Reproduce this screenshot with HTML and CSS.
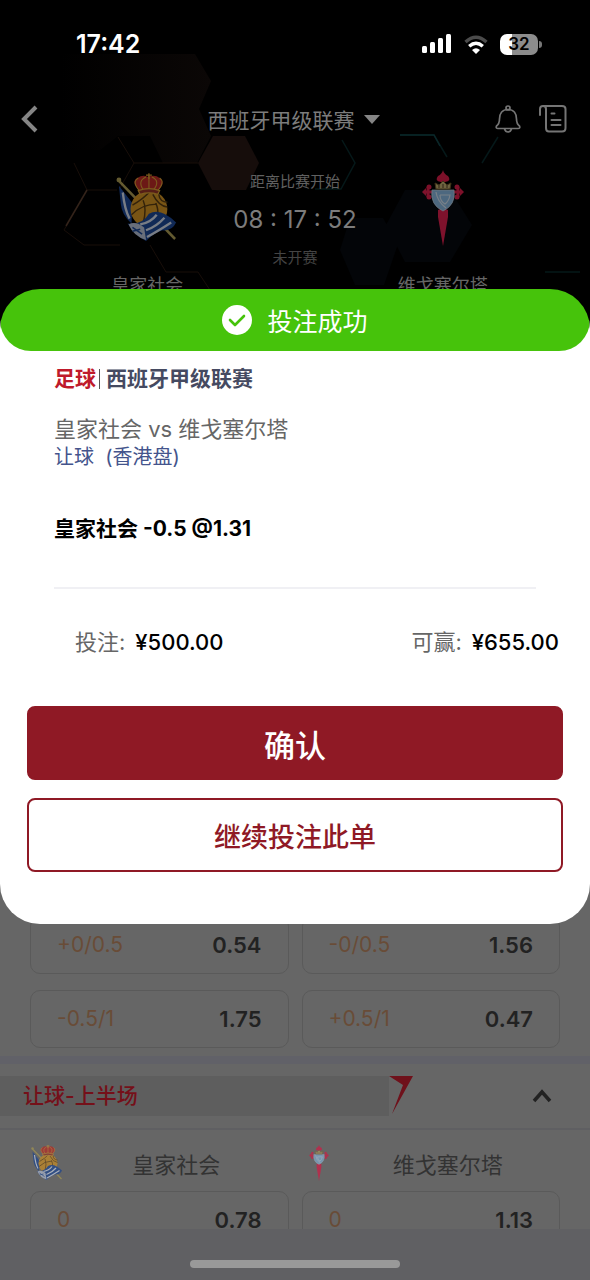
FILE: index.html
```html
<!DOCTYPE html>
<html lang="zh-CN">
<head>
  <meta charset="UTF-8" />
  <meta name="viewport" content="width=device-width, initial-scale=1.0" />
  <title>投注成功</title>
  <link rel="stylesheet" href="styles.css">
</head>

<body>
<!-- Shared crests -->
<svg class="sprite" aria-hidden="true">
  <symbol id="crest-rs" viewBox="0 0 64 72">
    <path d="M3 8 L61 68" stroke="#a59650" stroke-width="2.600" />
    <circle cx="3" cy="7" r="2.5" fill="#a59650" />
    <path d="M3 13 L17 31 L16 52 Q6 43 5 32 Z" fill="#1c4590" />
    <path d="M7 20 Q9 38 14 47" stroke="#c8d0de" stroke-width="2.400" fill="none" />
    <circle cx="34" cy="37" r="19" fill="#c88c22" />
    <path d="M17 33 Q28 27 36 18 M16 43 Q27 32 42 32 M28 28 Q32 37 28 52 M41 31 Q44 37 43 44 M38 22 Q44 34 53 35 M44 21 Q45 30 53 30" fill="none" stroke="#553a12" stroke-width="1.5" />
    <path d="M24 18 Q15 9 22 5 Q28 1 33 4 Q40 1 45 5 Q52 10 43 18 Z" fill="#b52a26" />
    <path d="M24 18 Q16 9 23 5 M28 17 Q22 8 31 4 M34 17 V3 M39 17 Q46 8 37 4 M43 18 Q51 9 45 5" stroke="#cf9b31" stroke-width="1.1" fill="none" />
    <path d="M34 0 V6 M31 2 H37 M23 18 Q34 14 45 18 L43 22 Q34 19 25 22 Z" stroke="#cf9b31" stroke-width="1.3" fill="#8f3325" />
    <path d="M12 52 Q27 54 34 42 Q46 35 62 51 Q58 60 48 59 Q40 61 31 70 Q19 64 12 52 Z" fill="#1c4590" />
    <path d="M25 53 Q36 51 42 43 M31 59 Q42 55 50 46 M32 66 Q43 60 57 51" stroke="#c8d0de" stroke-width="2.400" fill="none" />
    <path d="M13 53 Q20 49 29 56 L31 69 Q18 65 13 53 Z" fill="#aeb8cc" />
    <path d="M17 56 L27 63 M17 60 L25 58" stroke="#1c4590" stroke-width="1.5" />
  </symbol>
  <symbol id="crest-cv" viewBox="0 0 42 76">
    <path d="M21 0 Q22 4 26 6 Q30 11 23 12 H19 Q12 11 16 6 Q20 4 21 0 Z" fill="#d01c45" />
    <path d="M12 22 H3 M30 22 H39 M6 17 V27 M36 17 V27" stroke="#d01c45" stroke-width="3" />
    <circle cx="7" cy="17" r="2.500" fill="#d01c45" /><circle cx="7" cy="27" r="2.500" fill="#d01c45" />
    <circle cx="35" cy="17" r="2.500" fill="#d01c45" /><circle cx="35" cy="27" r="2.500" fill="#d01c45" />
    <path d="M0 22 L4 18 V26 Z M42 22 L38 18 V26 Z" fill="#d01c45" />
    <path d="M16 40 Q21 37 26 40 L26 47 L21 76 L16 47 Z" fill="#d01c45" />
    <path d="M10 20 H32 Q34 35 21 41 Q8 35 10 20 Z" fill="#7fabcf" stroke="#b4c3d0" stroke-width="0.8" />
    <path d="M14 22 Q15 31 24 38 M18 25 H28 Q27 31 23 34 Q18 31 18 25" stroke="#c5d2de" stroke-width="1.2" fill="none" />
    <path d="M14 19 L13 13 L17 15 L21 11 L25 15 L29 13 L28 19 Z" fill="#b8a66c" stroke="#665326" stroke-width="1" />
    <path d="M17 18 V15 M21 18 V14 M25 18 V15" stroke="#4d3920" stroke-width="1" />
  </symbol>
</svg>

<div class="screen">
  <header class="hero">
    <!-- Hexagon backdrop -->
    <svg class="hero-bg" viewBox="0 0 590 350" preserveAspectRatio="xMidYMin slice" aria-hidden="true">
      <defs>
        <linearGradient id="warm" x1="0" x2="1">
          <stop offset="0" stop-color="#000" />
          <stop offset="1" stop-color="#0b0706" />
        </linearGradient>
      </defs>
      <path d="M60 54 H195 L211 81 L199 109 L211 136 L197 163 H163 L150 136 H118 L100 150 H60 Z" fill="url(#warm)" />
      <path d="M213 136 H245 L259 163 L246 190 H212 L198 163 Z" fill="#160d0b" />
      <path d="M350 218 H383 L398 244 L384 285 H355 L340 250 Z M405 190 H450 L472 225 L450 262 H405 L386 225 Z" fill="#030508" />
      <g fill="none" stroke="#180e09">
        <path d="M74 163 L87 190 L64 230 L84 245 H120 M87 190 H117 M150 245 L166 272 H198 L210 290 M134 163 H198 M118 137 L134 163 L120 188" />
        <path d="M87 190 L66 226" stroke="#33231a" stroke-width="1.500" />
      </g>
      <g fill="none" stroke="#051819" stroke-width="1.500">
        <path d="M342 140 L355 163 L341 189 H315 M400 135 H434 L447 157 M482 163 L498 137 M545 272 H580" />
        <path d="M400 135 H434 L440 146" stroke="#0a2729" />
      </g>
    </svg>

    <div class="status-bar">
      <span class="clock">17:42</span>
      <svg class="signal" viewBox="0 0 30 20" aria-hidden="true">
        <g fill="#fff">
          <rect x="0" y="12" width="5" height="7" rx="1.5" /><rect x="8" y="8" width="5" height="11" rx="1.5" />
          <rect x="16" y="4" width="5" height="15" rx="1.5" /><rect x="24" y="0" width="5" height="19" rx="1.5" />
        </g>
      </svg>
      <svg class="wifi" viewBox="0 0 24 19" aria-hidden="true">
        <g fill="none" stroke-width="3.4">
          <path d="M1.500 7 Q12 -2.500 22.500 7" stroke="#4b4b4b" />
          <path d="M5.200 11.200 Q12 5.200 18.800 11.200" stroke="#fff" />
        </g>
        <path d="M8 15 Q12 11.500 16 15 L12 19 Z" fill="#fff" />
      </svg>
      <span class="battery">32</span>
    </div>

    <nav class="nav-bar">
      <button class="icon-btn" aria-label="返回">
        <svg width="20" height="30" viewBox="0 0 20 30" fill="none" stroke="#858585" stroke-width="4"><path d="M16 3 L4 15 L16 27" /></svg>
      </button>
      <button class="league-btn">西班牙甲级联赛
        <svg width="16" height="9" viewBox="0 0 16 9" aria-hidden="true"><path d="M0 0 H16 L8 9 Z" fill="#858585" /></svg>
      </button>
      <div class="nav-actions">
        <button class="icon-btn" aria-label="提醒">
          <svg width="26" height="28" viewBox="0 0 26 28" fill="none" stroke="#757575" stroke-width="1.7" stroke-linejoin="round">
            <circle cx="13" cy="3" r="2" />
            <path d="M13 4.500 C7 4.500 4.500 9 4.500 14 C4.500 18 3.500 19.500 1.500 21 Q0.500 23.500 3 23.500 H23 Q25.500 23.500 24.500 21 C22.500 19.500 21.500 18 21.500 14 C21.500 9 19 4.500 13 4.500 Z M9.500 24 Q10.500 27 13 27 Q15.500 27 16.500 24" />
          </svg>
        </button>
        <button class="icon-btn" aria-label="注单">
          <svg width="28" height="28" viewBox="0 0 28 28" fill="none" stroke="#757575" stroke-width="2" stroke-linecap="round">
            <path d="M1 10 V4 Q1 1 4 1 H23 Q26.500 1 26.500 4 V23 Q26.500 26.500 23 26.500 H10 Q7 26.500 7 23 V4 Q7 1 4 1" />
            <path d="M12.500 8.500 H15.500 M12.500 15 H21.500 M12.500 20 H21.500" />
          </svg>
        </button>
      </div>
    </nav>

    <div class="matchup">
      <div class="team">
        <svg class="crest-lg" aria-hidden="true"><use href="#crest-rs" /></svg>
        <span>皇家社会</span>
      </div>
      <div class="countdown">
        <span class="hint">距离比赛开始</span>
        <span class="timer">08 : 17 : 52</span>
        <span class="hint dim">未开赛</span>
      </div>
      <div class="team">
        <svg class="crest-lg" aria-hidden="true"><use href="#crest-cv" /></svg>
        <span>维戈塞尔塔</span>
      </div>
    </div>
  </header>

  <!-- Bet slip -->
  <section class="slip" role="dialog" aria-labelledby="slipTitle">
    <div class="slip-banner">
      <svg width="30" height="30" viewBox="0 0 30 30" aria-hidden="true">
        <circle cx="15" cy="15" r="15" fill="#fff" />
        <path d="M8 15 L13 20 L22 11" fill="none" stroke="#46c30b" stroke-width="2.600" stroke-linecap="round" stroke-linejoin="round" />
      </svg>
      <h1 id="slipTitle">投注成功</h1>
    </div>
    <div class="slip-body">
      <p class="league"><span class="sport">足球</span><span class="bar"></span>西班牙甲级联赛</p>
      <p class="fixture">皇家社会 vs 维戈塞尔塔</p>
      <p class="market-name">让球&nbsp; (香港盘)</p>
      <p class="pick">皇家社会 -0.5 @1.31</p>
    </div>
    <div class="amounts">
      <p>投注:<strong>¥500.00</strong></p>
      <p>可赢:<strong>¥655.00</strong></p>
    </div>
    <div class="slip-actions">
      <button class="btn-confirm">确认</button>
      <button class="btn-again">继续投注此单</button>
    </div>
  </section>

  <main class="markets">
    <div class="odds-grid">
      <button class="odd"><span>+0/0.5</span><b>0.54</b></button>
      <button class="odd"><span>-0/0.5</span><b>1.56</b></button>
      <button class="odd"><span>-0.5/1</span><b>1.75</b></button>
      <button class="odd"><span>+0.5/1</span><b>0.47</b></button>
    </div>

    <div class="market-head">
      <h2>让球-上半场</h2>
      <svg class="slash" width="24" height="40" viewBox="0 0 24 40" aria-hidden="true"><path d="M0 0 H24 L3 38 L14 9 Z" fill="#6f111b" /></svg>
      <button class="icon-btn" aria-label="收起">
        <svg width="20" height="14" viewBox="0 0 20 14" fill="none" stroke="#222" stroke-width="3.500"><path d="M2 12 L10 3 L18 12" /></svg>
      </button>
    </div>

    <div class="market-teams">
      <div class="market-team">
        <svg aria-hidden="true"><use href="#crest-rs" /></svg>
        <span>皇家社会</span>
      </div>
      <div class="market-team">
        <svg aria-hidden="true"><use href="#crest-cv" /></svg>
        <span>维戈塞尔塔</span>
      </div>
    </div>

    <div class="odds-grid">
      <button class="odd"><span>0</span><b>0.78</b></button>
      <button class="odd"><span>0</span><b>1.13</b></button>
    </div>
  </main>

  <footer class="bottom-bar"><div class="home-indicator"></div></footer>
</div>
</body>
</html>
```

FILE: styles.css
```css
* {
  box-sizing: border-box;
}

body {
  margin: 0;
  background-color: #666;
  font-family: Inter, 'Noto Sans CJK SC', sans-serif;
}

h1,
h2,
p {
  margin: 0;
  font-weight: 400;
}

button {
  font-family: inherit;
  cursor: pointer;
}

svg {
  display: block;
}

.sprite {
  position: absolute;
  width: 0;
  height: 0;
}

.screen {
  height: 100vh;
  display: flex;
  flex-direction: column;
}

/* Header */
.hero {
  position: relative;
  flex: none;
  height: 350px;
  background-color: #000;
  overflow: hidden;
}

.hero-bg {
  position: absolute;
  top: 0;
  left: 0;
  width: 100%;
  height: 100%;
}

.status-bar {
  position: relative;
  display: flex;
  align-items: center;
  height: 88px;
  padding: 0 52px 0 76px;
  color: #fff;
}

.clock {
  flex: 1;
  font-size: 25px;
  font-weight: 600;
}

.signal {
  width: 30px;
  height: 20px;
}

.wifi {
  width: 24px;
  height: 19px;
  margin: 0 12px;
}

.battery {
  position: relative;
  width: 38px;
  border-radius: 7px;
  background: linear-gradient(90deg, #fff 32%, #8c8c8c 32%);
  color: #000;
  font-size: 17px;
  font-weight: 600;
  line-height: 21px;
  text-align: center;
}

.battery::after {
  content: "";
  position: absolute;
  top: 7px;
  right: -4px;
  width: 3px;
  height: 7px;
  border-radius: 0 3px 3px 0;
  background-color: #777;
}

.nav-bar {
  position: relative;
  display: grid;
  grid-template-columns: 1fr auto 1fr;
  align-items: center;
  height: 62px;
  padding: 0 23px 0 20px;
}

.icon-btn {
  padding: 0;
  border: none;
  background: none;
  justify-self: start;
}

.league-btn {
  display: flex;
  align-items: center;
  gap: 9px;
  padding: 0;
  border: none;
  background: none;
  color: #7c7c7c;
  font-size: 21px;
}

.nav-actions {
  display: flex;
  justify-content: flex-end;
  gap: 18px;
}

.matchup {
  position: relative;
  display: grid;
  grid-template-columns: 1fr 1fr 1fr;
  padding: 20px 0 0;
}

.team {
  display: flex;
  flex-direction: column;
  align-items: center;
  gap: 28px;
  color: #666;
  font-size: 18px;
  line-height: 24px;
}

.team:first-child {
  padding-left: 98px;
}

.team:last-child {
  padding-right: 98px;
}

.team span {
  white-space: nowrap;
}

.crest-lg {
  width: 62px;
  height: 76px;
  opacity: 0.6;
}

.countdown {
  display: flex;
  flex-direction: column;
  align-items: center;
  line-height: 24px;
}

.hint {
  color: #606060;
  font-size: 15px;
}

.hint.dim {
  color: #444;
}

.timer {
  margin: 14px 0;
  color: #7c7c7c;
  font-size: 24px;
  white-space: nowrap;
}

/* Bet slip, laid over the end of the header and the top of the odds */
.slip {
  position: relative;
  z-index: 1;
  flex: none;
  margin-top: -61px;
  border-radius: 40px;
  background: linear-gradient(transparent 31px, #fff 31px);
  overflow: hidden;
}

.slip-banner {
  display: flex;
  align-items: center;
  justify-content: center;
  gap: 15px;
  height: 62px;
  border-radius: 31px;
  background-color: #46c30b;
  color: #fff;
}

.slip-banner h1 {
  font-size: 25px;
}

.slip-body {
  margin: 0 54px;
  padding: 14px 0 44px;
  border-bottom: 2px solid #f0f0f4;
  font-size: 21px;
  line-height: 28px;
}

.league {
  display: flex;
  align-items: center;
  color: #454a61;
  font-weight: 700;
}

.sport {
  color: #bf1a2b;
}

.bar {
  width: 1px;
  height: 20px;
  margin: 0 6px 0 3px;
  background-color: #555;
}

.fixture {
  margin-top: 22px;
  color: #666;
  font-size: 22px;
}

.market-name {
  color: #44548c;
  font-size: 20px;
}

.pick {
  margin-top: 44px;
  color: #000;
  font-weight: 700;
}

.amounts {
  display: flex;
  justify-content: space-between;
  padding: 37px 31px 48px 75px;
  color: #666;
  font-size: 22px;
  line-height: 32px;
}

.amounts strong {
  margin-left: 10px;
  color: #000;
  font-weight: 500;
}

.slip-actions {
  display: flex;
  flex-direction: column;
  gap: 18px;
  padding: 0 27px 52px;
}

.slip-actions button {
  height: 74px;
  border: 2px solid #8f1925;
  border-radius: 8px;
  font-weight: 500;
}

.btn-confirm {
  background-color: #8f1925;
  color: #fff;
  font-size: 31px;
}

.btn-again {
  background-color: #fff;
  color: #8f1925;
  font-size: 27px;
}

/* Odds */
.markets {
  flex: 1;
  min-height: 0;
  margin-top: -8px;
  overflow: hidden;
}

.odds-grid {
  display: grid;
  grid-template-columns: 1fr 1fr;
  gap: 16px 13px;
  padding: 0 30px;
}

.odd {
  display: flex;
  align-items: center;
  justify-content: space-between;
  height: 58px;
  padding: 0 26px;
  border: 1px solid #5a5a5a;
  border-radius: 10px;
  background: none;
  color: #694c37;
  font-size: 22px;
  line-height: 22px;
}

.odd span {
  font-size: 21px;
}

.odd b {
  color: #222;
  font-weight: 600;
}

.market-head {
  display: flex;
  align-items: center;
  height: 74px;
  margin-top: 8px;
  border-top: 8px solid #616168;
  border-bottom: 2px solid #5f5f62;
}

.market-head h2 {
  width: 66%;
  padding-left: 23px;
  background-color: #5e5e5e;
  color: #751019;
  font-size: 21px;
  font-weight: 500;
  line-height: 40px;
}

.market-head .icon-btn {
  margin: 0 38px 0 auto;
}

.market-teams {
  display: grid;
  grid-template-columns: 1fr 1fr;
  gap: 13px;
  height: 61px;
  padding: 4px 30px 0;
}

.market-team {
  display: flex;
  align-items: center;
  color: #333;
  font-size: 22px;
}

.market-team svg {
  width: 34px;
  height: 36px;
  opacity: 0.7;
}

.market-team span {
  flex: 1;
  text-align: center;
}

.bottom-bar {
  flex: none;
  height: 51px;
  padding-top: 31px;
  background-color: #606063;
}

.home-indicator {
  width: 210px;
  height: 8px;
  margin: 0 auto;
  border-radius: 4px;
  background-color: #999;
}
```
